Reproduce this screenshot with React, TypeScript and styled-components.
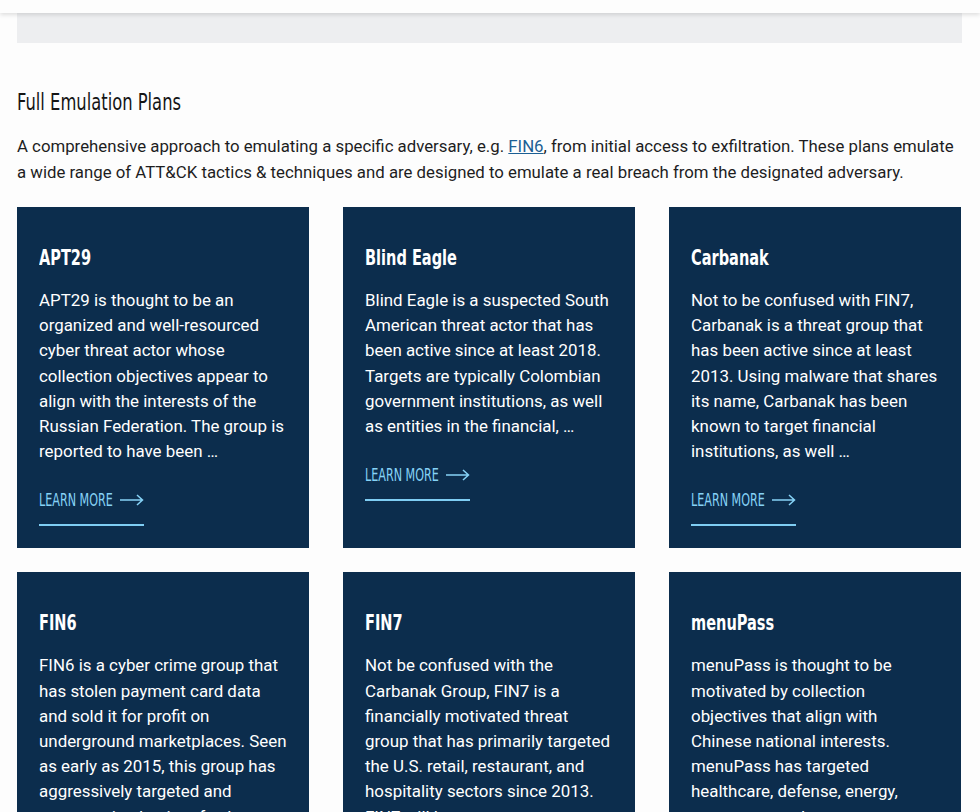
import React from "react";
import styled, { createGlobalStyle } from "styled-components";

const GlobalStyle = createGlobalStyle`
  html, body {
    margin: 0;
    padding: 0;
    background: #fdfdfd;
    font-family: Roboto, "Liberation Sans", sans-serif;
    color: #1d1d1f;
  }
  * { box-sizing: border-box; }
`;

// no Oswald offline: squeeze a condensed face to get close
const condensed = `"DejaVu Sans Condensed", "Liberation Sans Narrow", sans-serif`;

type Plan = { name: string; text: string };

const plans: Plan[] = [
  {
    name: "APT29",
    text: "APT29 is thought to be an organized and well-resourced cyber threat actor whose collection objectives appear to align with the interests of the Russian Federation. The group is reported to have been …",
  },
  {
    name: "Blind Eagle",
    text: "Blind Eagle is a suspected South American threat actor that has been active since at least 2018. Targets are typically Colombian government institutions, as well as entities in the financial, …",
  },
  {
    name: "Carbanak",
    text: "Not to be confused with FIN7, Carbanak is a threat group that has been active since at least 2013. Using malware that shares its name, Carbanak has been known to target financial institutions, as well …",
  },
  {
    name: "FIN6",
    text: "FIN6 is a cyber crime group that has stolen payment card data and sold it for profit on underground marketplaces. Seen as early as 2015, this group has aggressively targeted and compromised point of sale …",
  },
  {
    name: "FIN7",
    text: "Not be confused with the Carbanak Group, FIN7 is a financially motivated threat group that has primarily targeted the U.S. retail, restaurant, and hospitality sectors since 2013. FIN7 will leverage …",
  },
  {
    name: "menuPass",
    text: "menuPass is thought to be motivated by collection objectives that align with Chinese national interests. menuPass has targeted healthcare, defense, energy, aerospace, and government sectors …",
  },
];

const TopBar = styled.header`
  position: sticky;
  top: 0;
  height: 13px;
  background: #fdfdfd;
  box-shadow: 0 2px 4px rgba(0, 0, 0, 0.12);
  z-index: 2;
`;

const Page = styled.main`
  padding: 0 18px 40px 17px;
`;

const GreyBand = styled.div`
  height: 30px;
  background: #edeef0;
`;

const Section = styled.section`
  padding-top: 44px;
`;

const Squeeze = styled.span<{ $scale: number }>`
  display: inline-block;
  transform: scaleX(${(p) => p.$scale});
  transform-origin: left center;
  white-space: nowrap;
`;

const Heading = styled.h2`
  margin: 0 0 16px;
  font-family: ${condensed};
  font-weight: 400;
  font-size: 23px;
  line-height: 30px;
  color: #151515;
`;

const Intro = styled.p`
  margin: 0 0 22px;
  font-size: 16.8px;
  line-height: 26px;
  color: #1d1d1f;
`;

const InlineLink = styled.a`
  color: #1c5f94;
  text-decoration: underline;
`;

const Grid = styled.div`
  display: grid;
  grid-template-columns: repeat(3, 292px);
  column-gap: 34px;
  row-gap: 24px;
`;

const Card = styled.article`
  background: #0c2d4d;
  padding: 38px 22px 22px;
  display: flex;
  flex-direction: column;
  align-items: flex-start;
  min-height: 341px;
`;

const CardTitle = styled.h3`
  margin: 0 0 17px;
  font-family: ${condensed};
  font-weight: 700;
  font-size: 21px;
  line-height: 26px;
  color: #ffffff;
`;

const CardText = styled.p`
  margin: 0 0 24px;
  font-size: 16.9px;
  line-height: 25.2px;
  color: #ffffff;
`;

const LearnMore = styled.a`
  width: 105px;
  display: flex;
  align-items: center;
  padding-bottom: 12px;
  border-bottom: 2px solid #7fcdf3;
  font-family: ${condensed};
  font-size: 18px;
  line-height: 24px;
  color: #86d2f6;
  text-transform: uppercase;
  text-decoration: none;

  svg {
    flex-shrink: 0;
    margin-left: auto;
  }
`;

const LinkLabel = styled(Squeeze)`
  flex: 0 0 74px;
  width: 74px;
`;

const Arrow = () => (
  <svg width="24" height="12" viewBox="0 0 24 12" fill="none" stroke="#86d2f6" strokeWidth="1.5">
    <path d="M0 6h22.5M17 1l5.5 5-5.5 5" />
  </svg>
);

export default function App() {
  return (
    <>
      <GlobalStyle />
      <TopBar />
      <Page>
        <GreyBand />
        <Section>
          <Heading>
            <Squeeze $scale={0.79}>Full Emulation Plans</Squeeze>
          </Heading>
          <Intro>
            A comprehensive approach to emulating a specific adversary, e.g.{" "}
            <InlineLink href="#">FIN6</InlineLink>, from initial access to exfiltration. These plans emulate a
            wide range of ATT&amp;CK tactics &amp; techniques and are designed to emulate a real breach from the
            designated adversary.
          </Intro>
          <Grid>
            {plans.map((p) => (
              <Card key={p.name}>
                <CardTitle>
                  <Squeeze $scale={0.77}>{p.name}</Squeeze>
                </CardTitle>
                <CardText>{p.text}</CardText>
                <LearnMore href="#">
                  <LinkLabel $scale={0.69}>Learn more</LinkLabel>
                  <Arrow />
                </LearnMore>
              </Card>
            ))}
          </Grid>
        </Section>
      </Page>
    </>
  );
}
